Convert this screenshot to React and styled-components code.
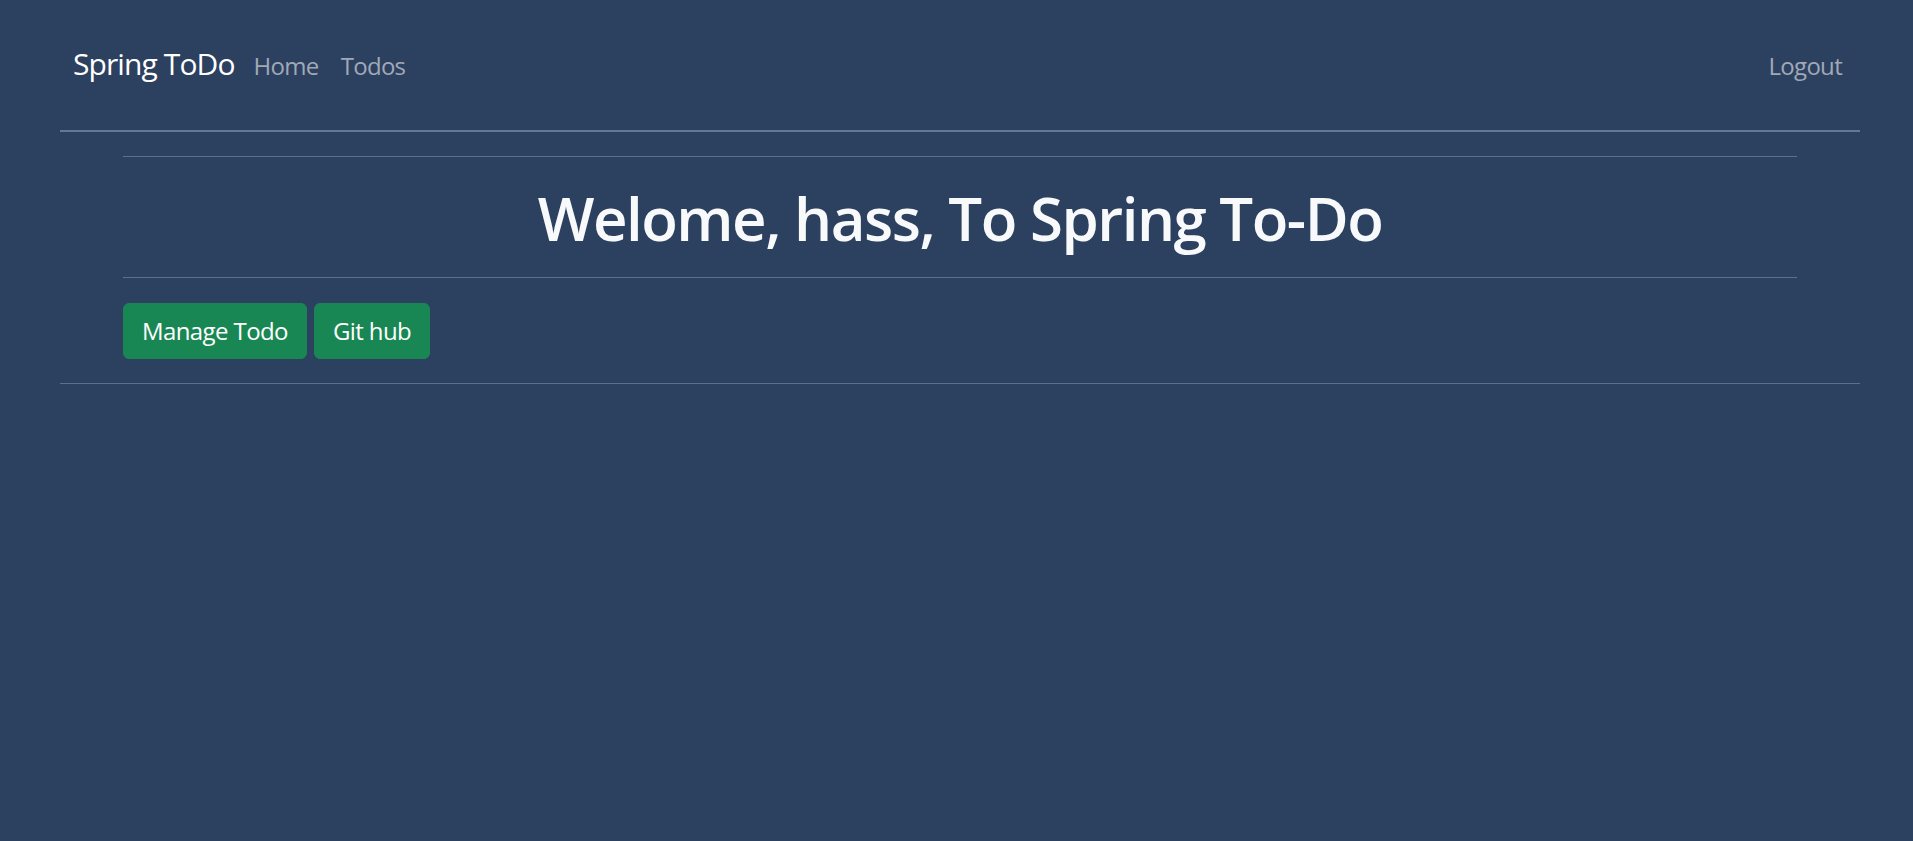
import React from "react";
import styled, { createGlobalStyle } from "styled-components";

const Global = createGlobalStyle`
  html, body {
    margin: 0;
    padding: 0;
    background: #2c4060;
    min-height: 100%;
  }
  body {
    font-family: "Open Sans", "Noto Sans", "Liberation Sans", sans-serif;
    color: #ffffff;
    min-height: 841px;
  }
`;

const Page = styled.div`
  width: 1800px;
  margin-left: 60px;
`;

const Navbar = styled.nav`
  display: flex;
  align-items: baseline;
  padding: 43px 18px 0 13px;
  height: 130px;
  box-sizing: border-box;
`;

const Brand = styled.a`
  font-size: 30px;
  letter-spacing: -0.9px;
  color: #ffffff;
  text-decoration: none;
  margin-right: 19px;
`;

const NavLinks = styled.div`
  display: flex;
  align-items: baseline;
  gap: 22px;
  flex: ${(p) => (p.$grow ? 1 : "none")};
`;

const NavLink = styled.a`
  font-size: 24px;
  letter-spacing: -0.7px;
  color: #a0a9b7;
  text-decoration: none;
`;

const Rule = styled.hr`
  margin: 0;
  border: 0;
  border-top: ${(p) => p.$thick || 1}px solid ${(p) => (p.$thick ? "#64779a" : "#5e6f89")};
`;

const Content = styled.main`
  padding: 24px 63px;
`;

const Title = styled.h1`
  margin: 0;
  padding: 25px 0 23px;
  text-align: center;
  font-size: 60px;
  font-weight: 600;
  letter-spacing: -1.5px;
  line-height: 1.2;
  color: #f8f9fa;
`;

const Actions = styled.div`
  display: flex;
  gap: 7px;
  margin-top: 25px;
`;

const Button = styled.a`
  display: inline-block;
  box-sizing: border-box;
  height: 56px;
  padding: 0 18px;
  line-height: 54px;
  border: 1px solid #198754;
  border-radius: 6px;
  background: #198754;
  color: #ffffff;
  font-size: 24px;
  letter-spacing: -0.6px;
  text-decoration: none;
`;

export default function App() {
  return (
    <>
      <Global />
      <Page>
        <Navbar>
          <Brand href="#">Spring ToDo</Brand>
          <NavLinks $grow>
            <NavLink href="#">Home</NavLink>
            <NavLink href="#">Todos</NavLink>
          </NavLinks>
          <NavLinks>
            <NavLink href="#">Logout</NavLink>
          </NavLinks>
        </Navbar>
        <Rule $thick={2} />
        <Content>
          <Rule />
          <Title>Welome, hass, To Spring To-Do</Title>
          <Rule />
          <Actions>
            <Button href="#">Manage Todo</Button>
            <Button href="#">Git hub</Button>
          </Actions>
        </Content>
        <Rule />
      </Page>
    </>
  );
}
